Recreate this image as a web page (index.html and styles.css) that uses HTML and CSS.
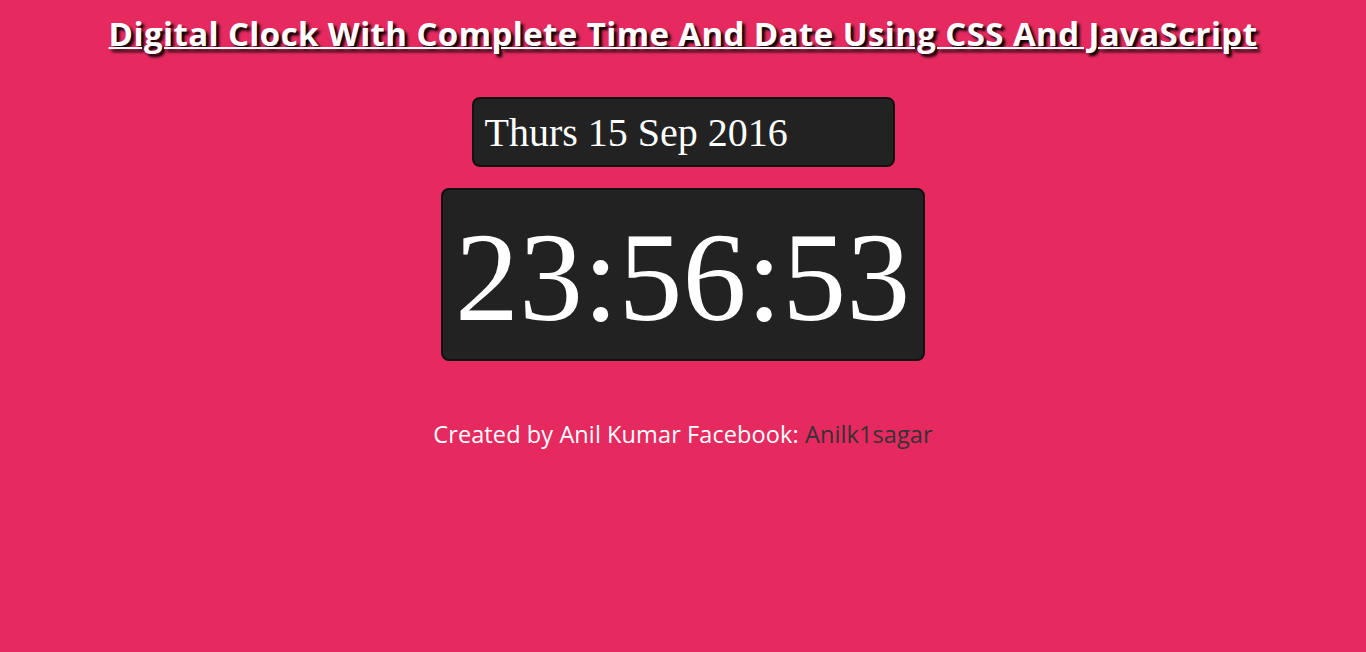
FILE: index.html
```html
<!DOCTYPE html>
<html>
<head>
<meta charset="utf-8">
<link rel="stylesheet" href="styles.css">
<title>Digital Clock</title>
</head>
<body>
<div class="page">
  <h1 class="title">Digital Clock With Complete Time And Date Using CSS And JavaScript</h1>
  <div class="date">Thurs 15 Sep 2016</div>
  <div class="time">23:56:53</div>
  <p class="credit">Created by Anil Kumar Facebook: <a class="link" href="#">Anilk1sagar</a></p>
</div>
</body>
</html>
```
FILE: styles.css
```css
html, body {
  margin: 0;
  padding: 0;
  background: #e62a60;
  height: 100%;
}
.page {
  display: flex;
  flex-direction: column;
  align-items: center;
}
.title {
  margin: 12px 0 0 0;
  font-family: "Open Sans", sans-serif;
  font-weight: 700;
  font-size: 33px;
  line-height: 44px;
  letter-spacing: 0.4px;
  color: #fff;
  text-decoration: underline;
  text-decoration-thickness: 2px;
  text-shadow: 3px 3px 3px #000;
}
.date {
  margin-top: 41px;
  box-sizing: border-box;
  width: 423px;
  height: 70px;
  padding: 11px 11px 0;
  background: #222;
  border: 2px solid #111;
  border-radius: 8px;
  font-family: "Liberation Serif", serif;
  font-size: 40px;
  line-height: 46px;
  color: #fff;
}
.time {
  margin-top: 21px;
  box-sizing: border-box;
  width: 484px;
  height: 173px;
  padding: 12px 0 0 12px;
  background: #222;
  border: 2px solid #111;
  border-radius: 8px;
  font-family: "Liberation Serif", serif;
  font-size: 128px;
  line-height: 150px;
  color: #fff;
}
.credit {
  margin: 57px 0 0 0;
  font-family: "Open Sans", sans-serif;
  font-size: 23.5px;
  line-height: 32px;
  letter-spacing: 0.1px;
  color: #fff;
}
.link {
  color: #333;
  text-decoration: none;
}
```
